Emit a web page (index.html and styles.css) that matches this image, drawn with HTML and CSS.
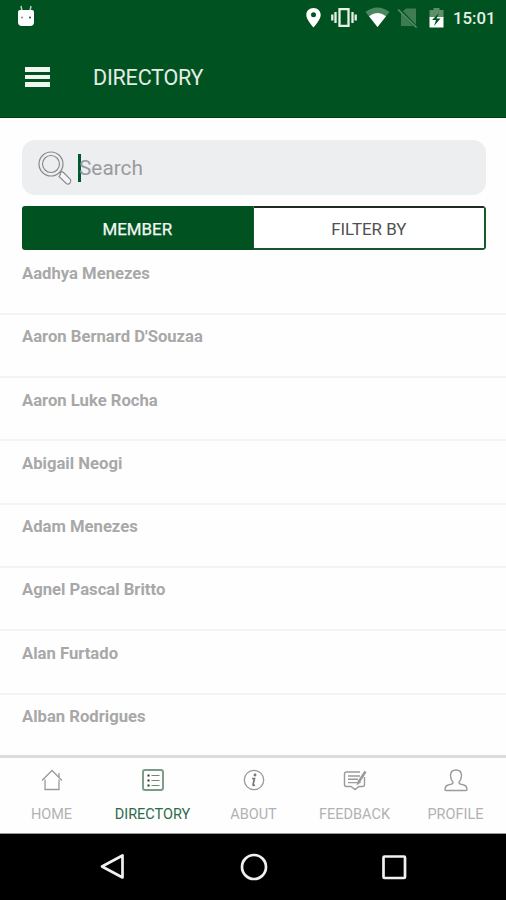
FILE: index.html
```html
<!DOCTYPE html>
<html lang="en">
<head>
<meta charset="utf-8">
<title>Directory</title>
<link rel="stylesheet" href="styles.css">
</head>
<body>
<div class="app">
  <header class="header">
    <div class="status">
      <svg class="cat" width="18" height="22" viewBox="0 0 18 22"><path d="M4 1l1 5M14 1l-1 5" stroke="#bcd0be" stroke-width="1.500"/><path d="M1 7q0-2 2-2h12q2 0 2 2v10q0 4-4 4H5q-4 0-4-4z" fill="#fff"/><circle cx="5" cy="12.500" r="1" fill="#799"/><circle cx="13" cy="12.500" r="1" fill="#244"/></svg>
      <svg class="indicators" width="142" height="24" viewBox="304 6 142 24">
        <path fill="#fff" fill-rule="evenodd" d="M313.500 8c-4.200 0-7.200 3-7.200 7 0 5 7.200 12.400 7.200 12.400s7.200-7.400 7.200-12.400c0-4-3-7-7.200-7zm0 4.300a2.500 2.500 0 1 1 0 5 2.500 2.500 0 0 1 0-5z"/>
        <path fill="none" stroke="#e8f0e6" stroke-width="2.300" d="M339.500 9.200h9v16.600h-9zM335.500 12v11M352.500 12v11M332.300 14.500v6M355.700 14.500v6"/>
        <path fill="#4d8760" d="M365.500 12q12-9 24 0L377.500 27z"/>
        <path fill="#fff" d="M369 16.200q8.500-6.500 17 0L377.500 27z"/>
        <path fill="#3f7c51" d="M401 13l5-4.500h10V26h-15z"/>
        <path stroke="#005826" stroke-width="3" d="M399 9l18 19"/>
        <path stroke="#5d9069" stroke-width="1.500" d="M398 9.500l18.500 18"/>
        <path fill="#5d9069" d="M429.500 10h4V8h6v2h4v8h-14z"/>
        <path fill="#fff" d="M429.500 17h14v10.500h-14z"/>
        <path fill="#005321" d="M439 13l-7 7h4l-2 6 6.500-7.500h-4z"/>
      </svg>
      <span class="clock">15:01</span>
    </div>
    <div class="toolbar">
      <div class="burger"><i></i><i></i><i></i></div>
      <h1 class="title">DIRECTORY</h1>
    </div>
  </header>

  <main class="content">
    <div class="search">
      <svg class="lens" width="36" height="36" viewBox="0 0 36 36" fill="none" stroke="#888b8d" stroke-width="1.200"><circle cx="14" cy="14" r="12"/><circle cx="14" cy="14" r="8.500"/><path d="M22 26.500l1.500-2-.5-1.500 2-1.500 2 1.500 6.500 6.500q1 2-.5 3.500t-3.500.8z" fill="#f5f6f7"/></svg>
      <span class="caret"></span>
      <span class="placeholder">Search</span>
    </div>
    <div class="tabs">
      <div class="tab selected">MEMBER</div>
      <div class="tab plain">FILTER BY</div>
    </div>
    <ul class="list">
      <li>Aadhya Menezes</li>
      <li>Aaron Bernard D'Souzaa</li>
      <li>Aaron Luke Rocha</li>
      <li>Abigail Neogi</li>
      <li>Adam Menezes</li>
      <li>Agnel Pascal Britto</li>
      <li>Alan Furtado</li>
      <li>Alban Rodrigues</li>
    </ul>
  </main>

  <nav class="nav">
    <a class="item"><svg width="26" height="26" viewBox="0 0 26 26"><path d="M3 13.500L13 3.500l10 10M6 12.500V22.500h14V12.500M20 10V6"/></svg><span>HOME</span></a>
    <a class="item active"><svg width="26" height="26" viewBox="0 0 26 26"><rect x="3" y="3" width="20" height="20" rx="2" stroke="#7b9a87" stroke-width="1.900"/><path d="M11.500 8.500h8M11.500 13.500h8M11.500 18.500h8" stroke="#6e8777" stroke-width="1.200"/><path d="M7.500 8.500h2M7.500 13.500h2M7.500 18.500h2" stroke="#173e28" stroke-width="2"/></svg><span>DIRECTORY</span></a>
    <a class="item"><svg width="26" height="26" viewBox="0 0 26 26"><circle cx="13" cy="13" r="9.700"/><path d="M11 11.500h2.500l-1.500 6q0 1.500 2 .5" stroke="#777" stroke-width="1.700"/><circle cx="14" cy="8" r=".8" fill="#777" stroke="#777"/></svg><span>ABOUT</span></a>
    <a class="item"><svg width="26" height="26" viewBox="0 0 26 26"><path d="M18 5H4.500Q2.500 5 2.500 7v10.500q0 2 2 2H9l4 3 4-3h3.500q2 0 2-2V10M6 9h12M6 12.300h10M6 15.600h9" stroke-width="1.400"/><path d="M17 14.500l6.500-10" stroke-width="2.600"/><path d="M15.500 17l.8-3 1.800 1.200z" fill="#858585"/></svg><span>FEEDBACK</span></a>
    <a class="item"><svg width="26" height="26" viewBox="0 0 26 26"><path d="M10 15.500Q7.500 12 7.500 8.500C7.500 5 9.500 3 13 3s5.500 2 5.500 5.500q0 3.500-2.500 7 0 1.500 2 1.800 6 .7 6 5.200 0 1-1 1H3q-1 0-1-1 0-4.500 6-5.200 2-.3 2-1.800z" stroke-width="1.400"/></svg><span>PROFILE</span></a>
  </nav>

  <footer class="system">
    <svg width="30" height="30" viewBox="0 0 30 30"><path d="M24.500 3.500v22L4 14.500z"/></svg>
    <svg width="30" height="30" viewBox="0 0 30 30"><circle cx="15" cy="15" r="12"/></svg>
    <svg width="30" height="30" viewBox="0 0 30 30"><rect x="4.500" y="4.500" width="21.500" height="21.500" rx="1"/></svg>
  </footer>
</div>
</body>
</html>
```
FILE: styles.css
```css
* { box-sizing: border-box; }
body { margin: 0; font-family: Roboto, sans-serif; background: #fff; }
.app { width: 506px; height: 900px; display: flex; flex-direction: column; overflow: hidden; }

.header { height: 118px; background: #005321; border-bottom: 1px solid #003d12; color: #fff; }
.status { height: 36px; display: flex; align-items: center; padding: 0 11px 0 17px; }
.cat { margin-top: -4px; }
.indicators { margin-left: auto; }
.clock { width: 42px; margin-left: 7px; font-size: 16.800px; font-weight: 500; line-height: 20px; color: #e8f0e8; white-space: nowrap; }
.toolbar { height: 82px; display: flex; align-items: center; padding-left: 24.500px; }
.burger { width: 25px; display: flex; flex-direction: column; gap: 3px; }
.burger i { height: 4.600px; background: #f2f6f0; }
.title { margin: 2px 0 0 43.500px; font-size: 21.500px; line-height: 28px; font-weight: 400; letter-spacing: -.2px; color: #e4ede4; }

.content { height: 637px; padding-top: 22px; background: #fefefe; overflow: hidden; }
.search { height: 55px; margin: 0 20px 0 22px; border-radius: 13px; background: #edeeef; display: flex; align-items: center; padding-left: 15px; }
.lens { margin-right: 5px; }
.caret { width: 2.500px; height: 28px; background: #00582a; margin-right: -1.500px; }
.placeholder { font-size: 20.800px; line-height: 28px; color: #999b9d; }
.tabs { height: 44px; margin: 11px 20px 0 22px; display: flex; border-radius: 3px; overflow: hidden; background: #fff; }
.tab { flex: 1; display: flex; align-items: center; justify-content: center; font-size: 16.900px; padding-top: 2px; }
.selected { background: #005321; color: #f4f8f4; -webkit-text-stroke: .25px #f4f8f4; }
.plain { color: #505050; border: 2px solid #17572a; border-top-color: #202a22; border-left-width: 1px; border-radius: 0 3px 3px 0; padding-top: 1px; }
.list { list-style: none; margin: 1.600px 0 0; padding: 0; }
.list li { height: 63.300px; border-bottom: 2px solid #f3f3f3; padding: 11.400px 22px 0; font-size: 16.650px; line-height: 22px; font-weight: 700; color: #a8a8a8; }
.list li:last-child { border-bottom: 0; }

.nav { height: 79px; border-top: 3px solid #dcdcdc; border-bottom: 1px solid #999; display: flex; background: #fefefe; padding-left: 1px; }
.item { flex: 1; display: flex; flex-direction: column; align-items: center; padding-top: 9px; font-size: 14.500px; line-height: 20px; color: #b2b2b2; }
.item span { margin-top: 12px; }
.item svg { fill: none; stroke: #9a9a9a; stroke-width: 1.300; }
.item.active { color: #2b6b48; }

.system { flex: 1; background: #000; display: flex; justify-content: center; gap: 110.500px; padding: 18px 0 0 1px; }
.system svg { fill: none; stroke: #f1f1f1; stroke-width: 2.700; stroke-linejoin: round; }
```
